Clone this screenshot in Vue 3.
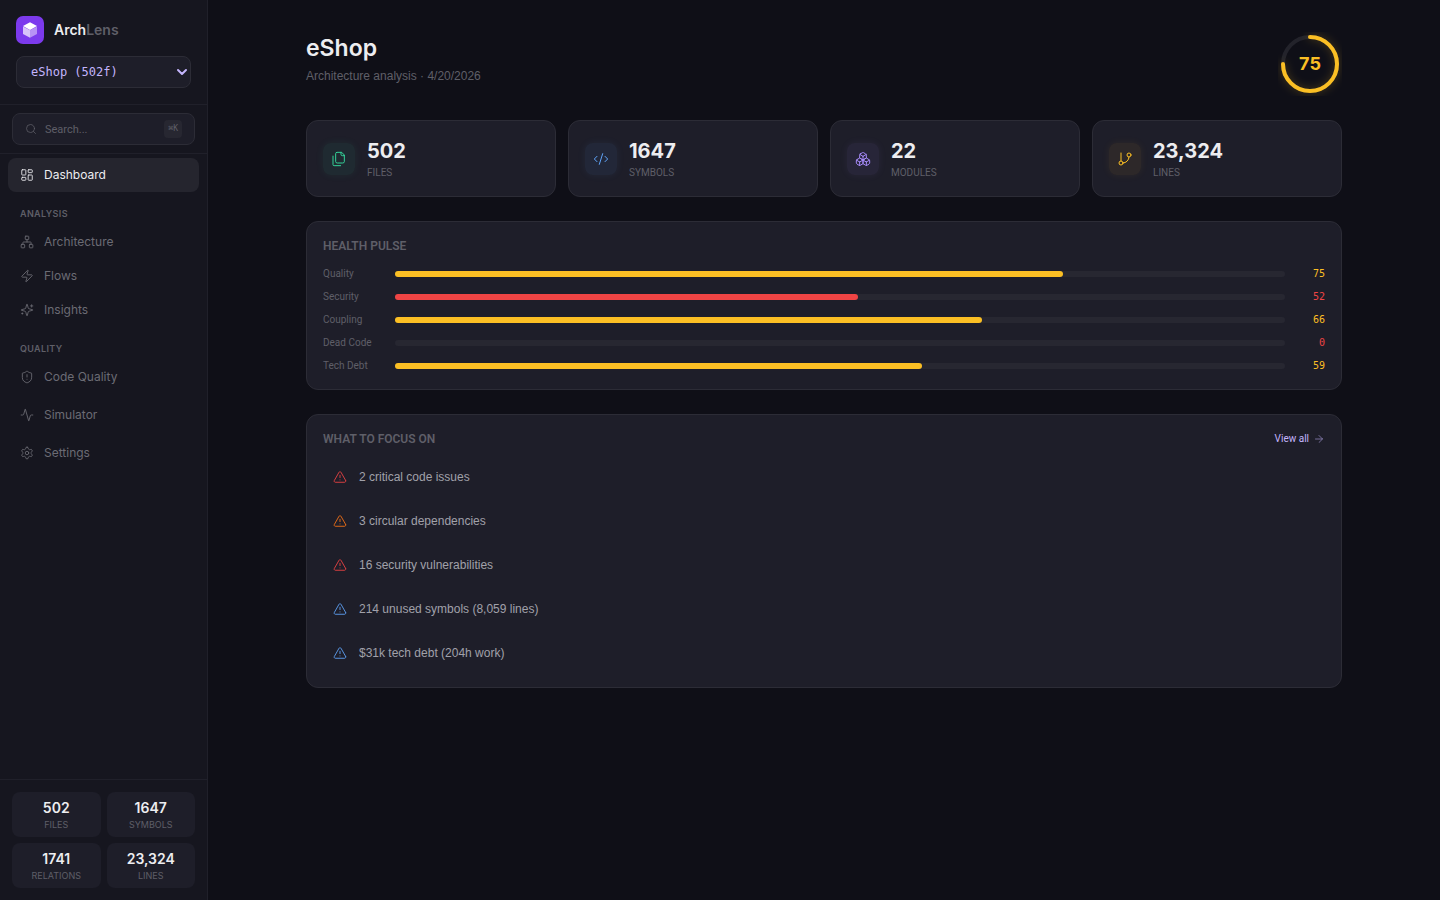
<template>
  <div class="app">
    <aside class="sidebar">
      <header class="brand-block">
        <div class="brand">
          <span class="logo">
            <svg viewBox="0 0 16 16" width="16" height="16" aria-hidden="true">
              <path d="M8 0.2 15 4 8 7.9 1 4z" fill="#fff" />
              <path d="M1 4.4 8 8.2v7.6L1 12z" fill="#fff" opacity="0.7" />
              <path d="M15 4.4 8 8.2v7.6l7-3.8z" fill="#fff" opacity="0.45" />
            </svg>
          </span>
          <span class="brand-name">Arch<span class="brand-dim">Lens</span></span>
        </div>
        <div class="project">
          <select v-model="project" class="project-select" aria-label="Project">
            <option value="eshop">eShop (502f)</option>
          </select>
          <svg class="icon chevron" viewBox="0 0 12 12" width="12" height="12" aria-hidden="true">
            <path d="M2 4l4 4 4-4" />
          </svg>
        </div>
      </header>

      <div class="search-block">
        <label class="search">
          <svg class="icon" viewBox="0 0 24 24" width="12" height="12" aria-hidden="true" v-html="icons.search"></svg>
          <input v-model="query" type="text" placeholder="Search..." aria-label="Search" />
          <kbd>⌘K</kbd>
        </label>
      </div>

      <nav class="nav">
        <div v-for="(group, i) in nav" :key="i" class="nav-group">
          <h2 v-if="group.title" class="nav-title">{{ group.title }}</h2>
          <a
            v-for="item in group.items"
            :key="item.label"
            href="#"
            class="nav-item"
            :class="{ active: active === item.label }"
            @click.prevent="active = item.label"
          >
            <svg class="icon" viewBox="0 0 24 24" width="14" height="14" aria-hidden="true" v-html="icons[item.icon]"></svg>
            {{ item.label }}
          </a>
        </div>
      </nav>

      <footer class="totals">
        <div v-for="t in totals" :key="t.label" class="total">
          <span class="total-value">{{ t.value }}</span>
          <span class="total-label">{{ t.label }}</span>
        </div>
      </footer>
    </aside>

    <main class="main">
      <div class="content">
        <header class="page-head">
          <div>
            <h1>eShop</h1>
            <p class="subtitle">Architecture analysis · 4/20/2026</p>
          </div>
          <div class="score">
            <svg viewBox="0 0 64 64" width="64" height="64" aria-hidden="true">
              <circle class="ring-track" cx="32" cy="32" r="27" />
              <circle class="ring-fill" cx="32" cy="32" r="27" pathLength="100" stroke-dasharray="75 100" transform="rotate(-90 32 32)" />
            </svg>
            <span class="score-value">75</span>
          </div>
        </header>

        <section class="stats">
          <div v-for="s in stats" :key="s.label" class="card stat">
            <span class="stat-icon" :class="s.tone">
              <svg class="icon" viewBox="0 0 24 24" width="16" height="16" aria-hidden="true" v-html="icons[s.icon]"></svg>
            </span>
            <div>
              <div class="stat-value">{{ s.value }}</div>
              <div class="stat-label">{{ s.label }}</div>
            </div>
          </div>
        </section>

        <section class="card panel">
          <div class="panel-head">
            <h2>HEALTH PULSE</h2>
          </div>
          <div class="pulse">
            <div v-for="p in pulse" :key="p.label" class="pulse-row">
              <span class="pulse-label">{{ p.label }}</span>
              <div class="bar">
                <div class="bar-fill" :class="level(p.value)" :style="{ width: p.value + '%' }"></div>
              </div>
              <span class="pulse-value" :class="level(p.value)">{{ Math.round(p.value) }}</span>
            </div>
          </div>
        </section>

        <section class="card panel">
          <div class="panel-head">
            <h2>WHAT TO FOCUS ON</h2>
            <a href="#" class="view-all">
              View all
              <svg class="icon" viewBox="0 0 24 24" width="12" height="12" aria-hidden="true" v-html="icons.arrow"></svg>
            </a>
          </div>
          <div class="focus">
            <a v-for="f in focus" :key="f.text" href="#" class="focus-item">
              <svg class="icon" :class="f.tone" viewBox="0 0 24 24" width="14" height="14" aria-hidden="true" v-html="icons.alert"></svg>
              {{ f.text }}
            </a>
          </div>
        </section>
      </div>
    </main>
  </div>
</template>

<script setup>
import { ref } from "vue";

const project = ref("eshop");
const query = ref("");
const active = ref("Dashboard");

const nav = [
  { items: [{ label: "Dashboard", icon: "dashboard" }] },
  {
    title: "ANALYSIS",
    items: [
      { label: "Architecture", icon: "network" },
      { label: "Flows", icon: "zap" },
      { label: "Insights", icon: "sparkles" },
    ],
  },
  { title: "QUALITY", items: [{ label: "Code Quality", icon: "shield" }] },
  { items: [{ label: "Simulator", icon: "activity" }] },
  { items: [{ label: "Settings", icon: "settings" }] },
];

const totals = [
  { value: "502", label: "FILES" },
  { value: "1647", label: "SYMBOLS" },
  { value: "1741", label: "RELATIONS" },
  { value: "23,324", label: "LINES" },
];

const stats = [
  { value: "502", label: "FILES", icon: "files", tone: "green" },
  { value: "1647", label: "SYMBOLS", icon: "code", tone: "blue" },
  { value: "22", label: "MODULES", icon: "boxes", tone: "purple" },
  { value: "23,324", label: "LINES", icon: "branch", tone: "amber" },
];

const pulse = [
  { label: "Quality", value: 75 },
  { label: "Security", value: 52 },
  { label: "Coupling", value: 66 },
  { label: "Dead Code", value: 0 },
  { label: "Tech Debt", value: 59.2 },
];

const focus = [
  { text: "2 critical code issues", tone: "red" },
  { text: "3 circular dependencies", tone: "orange" },
  { text: "16 security vulnerabilities", tone: "red" },
  { text: "214 unused symbols (8,059 lines)", tone: "blue" },
  { text: "$31k tech debt (204h work)", tone: "blue" },
];

const level = (value) => (value >= 55 ? "mid" : "low");

const icons = {
  search: '<circle cx="11" cy="11" r="8"/><path d="m21 21-4.3-4.3"/>',
  dashboard:
    '<rect width="7" height="9" x="3" y="3" rx="1"/><rect width="7" height="5" x="14" y="3" rx="1"/><rect width="7" height="9" x="14" y="12" rx="1"/><rect width="7" height="5" x="3" y="16" rx="1"/>',
  network:
    '<rect x="16" y="16" width="6" height="6" rx="1"/><rect x="2" y="16" width="6" height="6" rx="1"/><rect x="9" y="2" width="6" height="6" rx="1"/><path d="M5 16v-3a1 1 0 0 1 1-1h12a1 1 0 0 1 1 1v3M12 12V8"/>',
  zap: '<path d="M4 14a1 1 0 0 1-.78-1.63l9.9-10.2a.5.5 0 0 1 .86.46l-1.92 6.02A1 1 0 0 0 13 10h7a1 1 0 0 1 .78 1.63l-9.9 10.2a.5.5 0 0 1-.86-.46l1.92-6.02A1 1 0 0 0 11 14z"/>',
  sparkles:
    '<path d="M9.937 15.5A2 2 0 0 0 8.5 14.063l-6.135-1.582a.5.5 0 0 1 0-.962L8.5 9.936A2 2 0 0 0 9.937 8.5l1.582-6.135a.5.5 0 0 1 .963 0L14.063 8.5A2 2 0 0 0 15.5 9.937l6.135 1.581a.5.5 0 0 1 0 .964L15.5 14.063a2 2 0 0 0-1.437 1.437l-1.582 6.135a.5.5 0 0 1-.963 0z"/><path d="M20 3v4M22 5h-4M4 17v2M5 18H3"/>',
  shield:
    '<path d="M20 13c0 5-3.5 7.5-7.66 8.95a1 1 0 0 1-.67-.01C7.5 20.5 4 18 4 13V6a1 1 0 0 1 1-1c2 0 4.5-1.2 6.24-2.72a1.17 1.17 0 0 1 1.52 0C14.51 3.81 17 5 19 5a1 1 0 0 1 1 1z"/><path d="M12 8v4M12 16h.01"/>',
  activity:
    '<path d="M22 12h-2.48a2 2 0 0 0-1.93 1.46l-2.35 8.36a.25.25 0 0 1-.48 0L9.24 2.18a.25.25 0 0 0-.48 0l-2.35 8.36A2 2 0 0 1 4.49 12H2"/>',
  settings:
    '<path d="M12.22 2h-.44a2 2 0 0 0-2 2v.18a2 2 0 0 1-1 1.73l-.43.25a2 2 0 0 1-2 0l-.15-.08a2 2 0 0 0-2.73.73l-.22.38a2 2 0 0 0 .73 2.73l.15.1a2 2 0 0 1 1 1.72v.51a2 2 0 0 1-1 1.74l-.15.09a2 2 0 0 0-.73 2.73l.22.38a2 2 0 0 0 2.73.73l.15-.08a2 2 0 0 1 2 0l.43.25a2 2 0 0 1 1 1.73V20a2 2 0 0 0 2 2h.44a2 2 0 0 0 2-2v-.18a2 2 0 0 1 1-1.73l.43-.25a2 2 0 0 1 2 0l.15.08a2 2 0 0 0 2.73-.73l.22-.39a2 2 0 0 0-.73-2.73l-.15-.08a2 2 0 0 1-1-1.74v-.5a2 2 0 0 1 1-1.74l.15-.09a2 2 0 0 0 .73-2.73l-.22-.38a2 2 0 0 0-2.73-.73l-.15.08a2 2 0 0 1-2 0l-.43-.25a2 2 0 0 1-1-1.73V4a2 2 0 0 0-2-2z"/><circle cx="12" cy="12" r="3"/>',
  files:
    '<path d="M20 7h-3a2 2 0 0 1-2-2V2"/><path d="M9 18a2 2 0 0 1-2-2V4a2 2 0 0 1 2-2h7l4 4v10a2 2 0 0 1-2 2Z"/><path d="M3 7.6v12.8A1.6 1.6 0 0 0 4.6 22h9.8"/>',
  code: '<path d="m18 16 4-4-4-4M6 8l-4 4 4 4M14.5 4l-5 16"/>',
  boxes:
    '<path d="M2.97 12.92A2 2 0 0 0 2 14.63v3.24a2 2 0 0 0 .97 1.71l3 1.8a2 2 0 0 0 2.06 0L12 19v-5.5l-5-3-4.03 2.42Z"/><path d="m7 16.5-4.74-2.85M7 16.5l5-3M7 16.5v5.17"/><path d="M12 13.5V19l3.97 2.38a2 2 0 0 0 2.06 0l3-1.8a2 2 0 0 0 .97-1.71v-3.24a2 2 0 0 0-.97-1.71L17 10.5l-5 3Z"/><path d="m17 16.5-5-3M17 16.5l4.74-2.85M17 16.5v5.17"/><path d="M7.97 4.42A2 2 0 0 0 7 6.13v4.37l5 3 5-3V6.13a2 2 0 0 0-.97-1.71l-3-1.8a2 2 0 0 0-2.06 0l-3 1.8Z"/><path d="M12 8 7.26 5.15M12 8l4.74-2.85M12 13.5V8"/>',
  branch:
    '<path d="M6 3v12"/><circle cx="18" cy="6" r="3"/><circle cx="6" cy="18" r="3"/><path d="M18 9a9 9 0 0 1-9 9"/>',
  alert:
    '<path d="m21.73 18-8-14a2 2 0 0 0-3.48 0l-8 14A2 2 0 0 0 4 21h16a2 2 0 0 0 1.73-3M12 9v4M12 17h.01"/>',
  arrow: '<path d="M5 12h14M12 5l7 7-7 7"/>',
};
</script>

<style>
body {
  background: #0f0f17;
}
</style>

<style scoped>
.app {
  display: flex;
  min-height: 100vh;
  background: #0f0f17;
  color: #ededf0;
  font-family: Inter, "Liberation Sans", sans-serif;
  font-size: 12px;
  line-height: 16px;
}
.app *,
.app {
  box-sizing: border-box;
}
h1,
h2,
p {
  margin: 0;
}
a {
  color: inherit;
  text-decoration: none;
}
.icon {
  flex: none;
  fill: none;
  stroke: currentColor;
  stroke-width: 1.5;
  stroke-linecap: round;
  stroke-linejoin: round;
}

/* sidebar */
.sidebar {
  flex: none;
  width: 208px;
  display: flex;
  flex-direction: column;
  background: #16161f;
  border-right: 1px solid #20202a;
}
.brand-block {
  padding: 16px;
  border-bottom: 1px solid #20202a;
}
.brand {
  display: flex;
  align-items: center;
  gap: 10px;
  margin-bottom: 12px;
}
.logo {
  display: flex;
  align-items: center;
  justify-content: center;
  width: 28px;
  height: 28px;
  border-radius: 7px;
  background: #7c3aed;
}
.brand-name {
  font-size: 14px;
  font-weight: 600;
}
.brand-dim {
  color: #5f5f68;
}
.project {
  position: relative;
}
.project-select {
  display: block;
  width: 100%;
  height: 32px;
  padding: 0 24px 0 14px;
  appearance: none;
  background: #1e1e29;
  border: 1px solid #2c2c36;
  border-radius: 8px;
  color: #c4b5fd;
  font-family: "DejaVu Sans Mono", monospace;
  font-size: 12px;
}
.chevron {
  position: absolute;
  right: 3px;
  top: 10px;
  color: #c4b5fd;
  stroke-width: 2;
  pointer-events: none;
}
.search-block {
  padding: 8px 12px;
  border-bottom: 1px solid #20202a;
}
.search {
  display: flex;
  align-items: center;
  gap: 8px;
  height: 32px;
  padding: 0 12px;
  background: #1e1e29;
  border: 1px solid #2c2c36;
  border-radius: 8px;
  color: #5f5f68;
}
.search input {
  flex: 1;
  min-width: 0;
  padding: 0;
  border: 0;
  outline: 0;
  background: transparent;
  color: #ededf0;
  font-family: Roboto, sans-serif;
  font-size: 11px;
}
.search input::placeholder {
  color: #5f5f68;
  opacity: 1;
}
.search kbd {
  padding: 1px 4px;
  border-radius: 4px;
  background: #272731;
  font-family: "DejaVu Sans Mono", monospace;
  font-size: 8px;
}
.nav {
  flex: 1;
  padding: 4px 8px;
}
.nav-group {
  margin-bottom: 4px;
}
.nav-title {
  padding: 12px 12px 5px;
  color: #5f5f68;
  font-size: 9px;
  font-weight: 600;
  line-height: 12px;
  letter-spacing: 0.04em;
}
.nav-item {
  display: flex;
  align-items: center;
  gap: 10px;
  height: 34px;
  padding: 0 12px;
  border-radius: 8px;
  color: #6b6b74;
}
.nav-item.active {
  background: #25252e;
  color: #ededf0;
}
.totals {
  display: grid;
  grid-template-columns: 1fr 1fr;
  gap: 6px;
  padding: 12px;
  border-top: 1px solid #20202a;
}
.total {
  display: flex;
  flex-direction: column;
  align-items: center;
  padding: 6px 4px;
  border-radius: 8px;
  background: #1e1e29;
}
.total-value {
  font-size: 14px;
  font-weight: 600;
  line-height: 20px;
}
.total-label {
  color: #5f5f68;
  font-size: 9px;
  line-height: 13px;
}

/* main */
.main {
  flex: 1;
  min-width: 0;
}
.content {
  display: flex;
  flex-direction: column;
  gap: 24px;
  max-width: 1100px;
  margin: 0 auto;
  padding: 32px;
}
.page-head {
  display: flex;
  align-items: flex-start;
  justify-content: space-between;
}
h1 {
  font-size: 23px;
  font-weight: 600;
  line-height: 32px;
}
.subtitle {
  margin-top: 4px;
  color: #5f5f68;
  font-family: "Liberation Sans", Arial, sans-serif;
}
.score {
  display: grid;
  place-items: center;
}
.score > * {
  grid-area: 1 / 1;
}
.score circle {
  fill: none;
  stroke-width: 4;
}
.ring-track {
  stroke: #23232b;
}
.ring-fill {
  stroke: #fbbf24;
  stroke-linecap: round;
  filter: drop-shadow(0 0 4px rgba(251, 191, 36, 0.3));
}
.score-value {
  color: #fbbf24;
  font-size: 18px;
  font-weight: 700;
}
.card {
  background: #1e1e29;
  border: 1px solid #2c2c36;
  border-radius: 12px;
}
.stats {
  display: grid;
  grid-template-columns: repeat(4, 1fr);
  gap: 12px;
}
.stat {
  display: flex;
  align-items: center;
  gap: 12px;
  padding: 16px;
}
.stat-icon {
  display: flex;
  align-items: center;
  justify-content: center;
  width: 32px;
  height: 32px;
  border-radius: 8px;
}
.stat-icon.green {
  color: #34d399;
  background: rgba(52, 211, 153, 0.07);
  box-shadow: 0 0 8px rgba(52, 211, 153, 0.07);
}
.stat-icon.blue {
  color: #60a5fa;
  background: rgba(96, 165, 250, 0.07);
  box-shadow: 0 0 8px rgba(96, 165, 250, 0.07);
}
.stat-icon.purple {
  color: #a78bfa;
  background: rgba(167, 139, 250, 0.07);
  box-shadow: 0 0 8px rgba(167, 139, 250, 0.07);
}
.stat-icon.amber {
  color: #fbbf24;
  background: rgba(251, 191, 36, 0.07);
  box-shadow: 0 0 8px rgba(251, 191, 36, 0.07);
}
.stat-value {
  font-size: 20px;
  font-weight: 700;
  line-height: 28px;
}
.stat-label {
  color: #5f5f68;
  font-family: Roboto, sans-serif;
  font-size: 10px;
  line-height: 15px;
}
.panel {
  padding: 16px;
}
.panel-head {
  display: flex;
  align-items: center;
  justify-content: space-between;
  margin-bottom: 12px;
}
.panel-head h2 {
  color: #5f5f68;
  font-family: Roboto, sans-serif;
  font-size: 12px;
  font-weight: 600;
}
.pulse {
  display: flex;
  flex-direction: column;
  gap: 8px;
}
.pulse-row {
  display: flex;
  align-items: center;
  gap: 12px;
  font-size: 10px;
  line-height: 15px;
}
.pulse-label {
  width: 60px;
  color: #5f5f68;
  font-family: Roboto, sans-serif;
}
.bar {
  flex: 1;
  height: 6px;
  border-radius: 3px;
  background: #272731;
}
.bar-fill {
  height: 100%;
  border-radius: 3px;
}
.bar-fill.mid {
  background: #fbbf24;
}
.bar-fill.low {
  background: #ef4444;
}
.pulse-value {
  width: 28px;
  text-align: right;
  font-family: "DejaVu Sans Mono", monospace;
}
.pulse-value.mid {
  color: #fbbf24;
}
.pulse-value.low {
  color: #ef4444;
}
.view-all {
  display: flex;
  align-items: center;
  gap: 4px;
  color: #c4b5fd;
  font-family: Roboto, sans-serif;
  font-size: 10px;
}
.view-all .icon {
  opacity: 0.7;
}
.focus {
  display: flex;
  flex-direction: column;
  gap: 8px;
}
.focus-item {
  display: flex;
  align-items: center;
  gap: 12px;
  height: 36px;
  padding: 0 10px;
  border-radius: 8px;
  color: #a1a1aa;
  font-family: "Liberation Sans", Arial, sans-serif;
}
.focus-item .red {
  color: #ef4444;
}
.focus-item .orange {
  color: #f97316;
}
.focus-item .blue {
  color: #60a5fa;
}
</style>
